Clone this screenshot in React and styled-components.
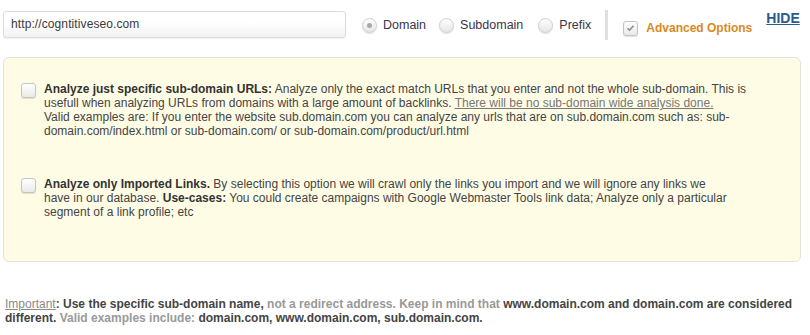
import React from "react";
import styled, { createGlobalStyle } from "styled-components";

const Global = createGlobalStyle`
  html, body { margin: 0; padding: 0; background: #fff; }
  body { font-family: Arial, "Liberation Sans", sans-serif; color: #444; }
`;

const Page = styled.div`
  width: 810px;
  padding: 0 3px;
  box-sizing: border-box;
`;

const TopBar = styled.div`
  display: flex;
  align-items: flex-start;
  padding-top: 10px;
  height: 46px;
  box-sizing: border-box;
`;

const UrlInput = styled.div`
  width: 343px;
  height: 27px;
  box-sizing: border-box;
  margin-top: 1px;
  border: 1px solid #dcdcdc;
  border-radius: 3px;
  background: linear-gradient(#ffffff 40%, #f1f1f1);
  box-shadow: 0 1px 1px rgba(0,0,0,0.06);
  font-size: 12px;
  color: #3a3a3a;
  padding: 5px 0 0 7px;
  letter-spacing: 0.1px;
`;

const RadioGroup = styled.div`
  display: flex;
  align-items: center;
  margin-left: 16px;
  height: 30px;
`;

const RadioItem = styled.label`
  display: flex;
  align-items: center;
  font-size: 12.5px;
  color: #3b3546;
  margin-right: ${(p) => p.$gap}px;
`;

const RadioCircle = styled.span`
  width: 15px;
  height: 15px;
  box-sizing: border-box;
  border-radius: 50%;
  border: 1px solid #cfcfcf;
  background: linear-gradient(#ffffff, #e6e6e6);
  box-shadow: 0 1px 1px rgba(0,0,0,0.12);
  margin-right: 6px;
  display: flex;
  align-items: center;
  justify-content: center;
  &::after {
    content: "";
    width: 5px;
    height: 5px;
    border-radius: 50%;
    background: ${(p) => (p.$checked ? "#a8a8a8" : "transparent")};
  }
`;

const Separator = styled.div`
  width: 3px;
  height: 30px;
  background: #e0e0e0;
  margin-right: 15px;
`;

const Box = styled.span`
  flex: none;
  width: 15px;
  height: 15px;
  box-sizing: border-box;
  border-radius: 3px;
  border: 1px solid #c4c4c4;
  background: linear-gradient(#ffffff, #e9e9e9);
  box-shadow: 0 1px 1px rgba(0,0,0,0.12);
  display: flex;
  align-items: center;
  justify-content: center;
`;

const AdvLabel = styled.label`
  display: flex;
  align-items: center;
  height: 30px;
  margin-top: 3px;
  font-size: 12px;
  font-weight: bold;
  color: #d98a1e;
  gap: 8px;
`;

const Hide = styled.a`
  font-size: 14px;
  font-weight: bold;
  color: #2c5b8a;
  text-decoration: underline;
  margin-left: 14px;
  line-height: 16px;
`;

const Panel = styled.div`
  margin-top: 11px;
  background: #fffce6;
  border: 1px solid #e3e3dc;
  border-radius: 6px;
  padding: 24px 14px 42px 17px;
  display: flex;
  flex-direction: column;
  gap: 39px;
  width: 798px;
  box-sizing: border-box;
`;

const Option = styled.div`
  display: flex;
  align-items: flex-start;
  gap: 8px;
`;

const OptionBox = styled(Box)`
  margin-top: 1px;
`;

const OptionText = styled.div`
  font-size: 12px;
  line-height: 14px;
  color: #444;
  max-width: ${(p) => p.$w}px;
  b { color: #333; }
`;

const Underline = styled.span`
  text-decoration: underline;
  color: #777;
`;

const Note = styled.div`
  margin-top: 35px;
  padding-left: 2px;
  font-size: 12px;
  line-height: 14px;
  font-weight: bold;
  color: #444;
`;

const Muted = styled.span`
  color: ${(p) => (p.$light ? "#999" : "#8a8a8a")};
  font-weight: ${(p) => (p.$normal ? "normal" : "bold")};
  text-decoration: ${(p) => (p.$u ? "underline" : "none")};
`;

const Check = () => (
  <svg width="9" height="8" viewBox="0 0 9 8">
    <path d="M1.5 4.3 L3.6 6.2 L7.5 1.8" fill="none" stroke="#8d8d8d" strokeWidth="1.6" />
  </svg>
);

export default function App() {
  return (
    <Page>
      <Global />
      <TopBar>
        <UrlInput>http://cogntitiveseo.com</UrlInput>
        <RadioGroup>
          <RadioItem $gap={13}>
            <RadioCircle $checked />
            Domain
          </RadioItem>
          <RadioItem $gap={15}>
            <RadioCircle />
            Subdomain
          </RadioItem>
          <RadioItem $gap={14}>
            <RadioCircle />
            Prefix
          </RadioItem>
        </RadioGroup>
        <Separator />
        <AdvLabel>
          <Box>
            <Check />
          </Box>
          Advanced Options
        </AdvLabel>
        <Hide>HIDE</Hide>
      </TopBar>
      <Panel>
        <Option>
          <OptionBox />
          <OptionText $w={730}>
            <b>Analyze just specific sub-domain URLs:</b> Analyze only the exact match URLs that you
            enter and not the whole sub-domain. This is usefull when analyzing URLs from domains with
            a large amount of backlinks.{" "}
            <Underline>There will be no sub-domain wide analysis done.</Underline>
            <br />
            Valid examples are: If you enter the website sub.domain.com you can analyze any urls that
            are on sub.domain.com such as: sub-domain.com/index.html or sub-domain.com/ or
            sub-domain.com/product/url.html
          </OptionText>
        </Option>
        <Option>
          <OptionBox />
          <OptionText $w={690}>
            <b>Analyze only Imported Links.</b> By selecting this option we will crawl only the links
            you import and we will ignore any links we have in our database. <b>Use-cases:</b> You
            could create campaigns with Google Webmaster Tools link data; Analyze only a particular
            segment of a link profile; etc
          </OptionText>
        </Option>
      </Panel>
      <Note>
        <Muted $u $normal>Important</Muted>: Use the specific sub-domain name,{" "}
        <Muted $light>not a redirect address. Keep in mind that</Muted> www.domain.com and domain.com
        are considered different. <Muted $light>Valid examples include:</Muted> domain.com,
        www.domain.com, sub.domain.com.
      </Note>
    </Page>
  );
}
